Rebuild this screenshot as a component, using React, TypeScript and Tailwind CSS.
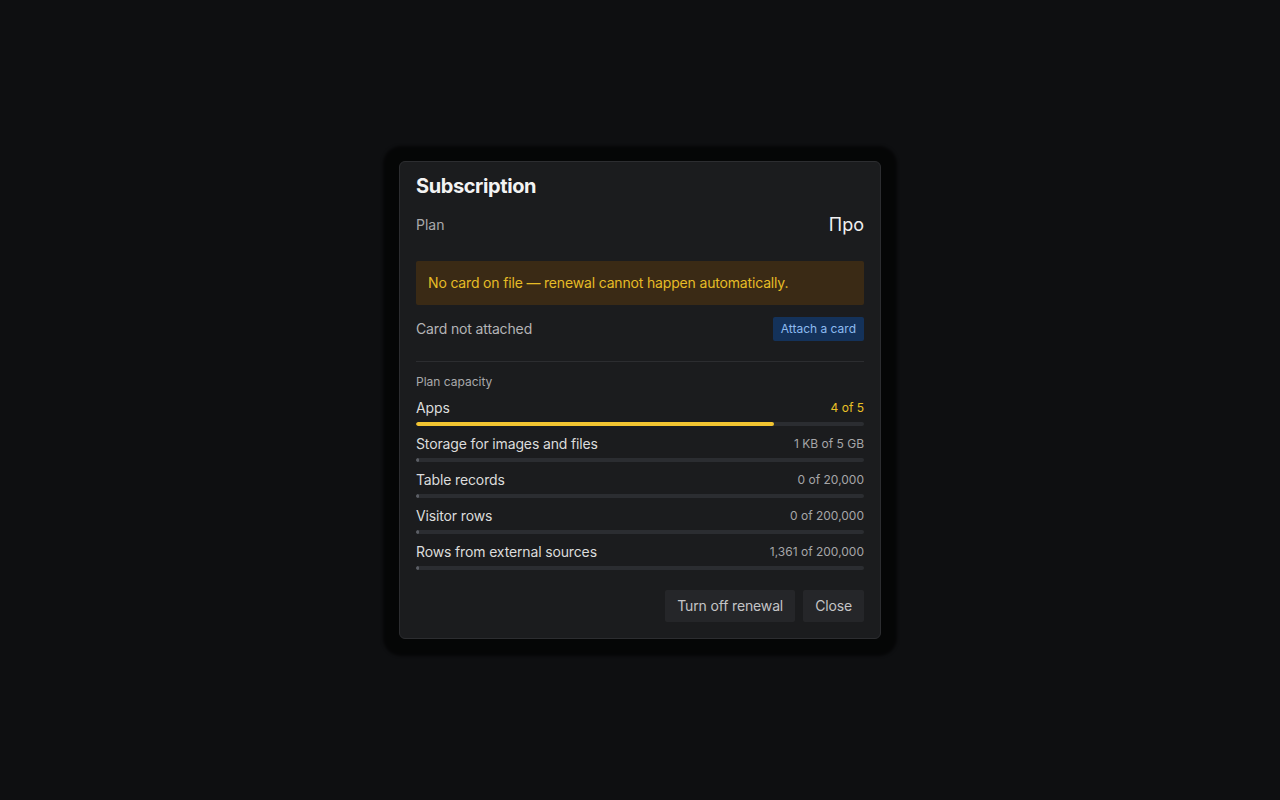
import React from "react";

type Quota = { label: string; value: string; pct: number; accent?: boolean };

const quotas: Quota[] = [
  { label: "Apps", value: "4 of 5", pct: 80, accent: true },
  { label: "Storage for images and files", value: "1 KB of 5 GB", pct: 0 },
  { label: "Table records", value: "0 of 20,000", pct: 0 },
  { label: "Visitor rows", value: "0 of 200,000", pct: 0 },
  { label: "Rows from external sources", value: "1,361 of 200,000", pct: 0.68 },
];

function QuotaRow({ q }: { q: Quota }) {
  return (
    <div className="flex flex-col">
      <div className="flex h-5 items-center justify-between">
        <span className="text-[14px] leading-5 tracking-[-0.01em] text-[#dcdcdc]">{q.label}</span>
        <span
          className={
            q.accent
              ? "text-[12px] leading-4 text-[#e9c026]"
              : "text-[12px] leading-4 text-[#a6a6a8]"
          }
        >
          {q.value}
        </span>
      </div>
      <div className="mt-1 h-1 w-full overflow-hidden rounded-full bg-[#2b2d31]">
        <div
          className={q.accent ? "h-full rounded-full bg-[#f2c431]" : "h-full rounded-full bg-[#5c5f66]"}
          style={{ width: `max(${q.pct}%, 3px)` }}
        />
      </div>
    </div>
  );
}

export default function App() {
  return (
    <div
      className="flex min-h-[800px] w-full items-start justify-center bg-[#0e0f11] pt-[161px]"
      style={{ fontFamily: "Inter, 'Noto Sans', sans-serif" }}
    >
      <div className="w-[482px] rounded-md border border-[#2c2d30] bg-[#1b1c1e] px-4 pb-4 pt-[10px] shadow-[0_1px_3px_16px_rgba(0,0,0,0.6)]">
        <h2 className="text-[20px] font-bold leading-7 tracking-[-0.02em] text-[#f3f3f3]">Subscription</h2>

        <div className="mt-[11px] flex h-7 items-center justify-between">
          <span className="text-[14px] leading-5 text-[#a9a9ab]">Plan</span>
          <span className="text-[18px] font-normal leading-7 text-[#f0f0f0]">Про</span>
        </div>

        <div className="mt-[22px] rounded-[2px] bg-[#3a2a15] px-3 py-3 text-[14px] leading-5 tracking-[-0.012em] text-[#e6bc26]">
          No card on file — renewal cannot happen automatically.
        </div>

        <div className="mt-3 flex h-6 items-center justify-between">
          <span className="text-[14px] leading-5 tracking-[-0.01em] text-[#b4b4b6]">Card not attached</span>
          <button className="h-6 rounded-[2px] bg-[#14325a] px-2 text-[12px] leading-4 text-[#8dbbf0]">
            Attach a card
          </button>
        </div>

        <div className="mt-5 h-px w-full bg-[#2c2d30]" />

        <div className="mt-3 text-[12px] leading-4 text-[#a9a9ab]">Plan capacity</div>

        <div className="mt-2 flex flex-col gap-2">
          {quotas.map((q) => (
            <QuotaRow key={q.label} q={q} />
          ))}
        </div>

        <div className="mt-5 flex justify-end gap-2">
          <button className="h-8 rounded-[2px] bg-[#252629] px-3 text-[14px] leading-5 tracking-[-0.01em] text-[#c4c4c6]">
            Turn off renewal
          </button>
          <button className="h-8 rounded-[2px] bg-[#252629] px-3 text-[14px] leading-5 tracking-[-0.01em] text-[#c4c4c6]">
            Close
          </button>
        </div>
      </div>
    </div>
  );
}
